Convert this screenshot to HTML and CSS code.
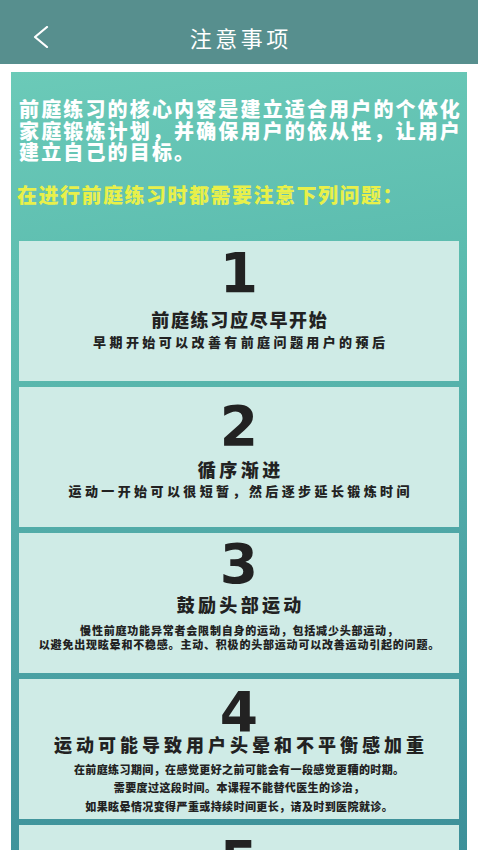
FILE: index.html
```html
<!DOCTYPE html>
<html lang="zh-CN">
<head>
<meta charset="utf-8">
<title>注意事项</title>
<link rel="stylesheet" href="styles.css">
</head>
<body>
<header class="topbar">
  <div class="back">
    <svg width="16" height="22" viewBox="0 0 16 22"><polyline points="14,1 2,11 14,21" fill="none" stroke="#ffffff" stroke-width="2.2" stroke-linecap="round" stroke-linejoin="round"/></svg>
  </div>
  <h1 class="title">注意事项</h1>
  <div class="spacer"></div>
</header>
<main class="page">
  <section class="panel">
    <p class="intro">前庭练习的核心内容是建立适合用户的个体化<br>家庭锻炼计划，并确保用户的依从性，让用户<br>建立自己的目标。</p>
    <p class="notice">在进行前庭练习时都需要注意下列问题：</p>
    <div class="cards">
      <div class="card card-1">
        <div class="num">1</div>
        <div class="card-title t1">前庭练习应尽早开始</div>
        <div class="card-sub">早期开始可以改善有前庭问题用户的预后</div>
      </div>
      <div class="card card-2">
        <div class="num">2</div>
        <div class="card-title t2">循序渐进</div>
        <div class="card-sub">运动一开始可以很短暂，然后逐步延长锻炼时间</div>
      </div>
      <div class="card card-3">
        <div class="num">3</div>
        <div class="card-title t3">鼓励头部运动</div>
        <div class="card-small">慢性前庭功能异常者会限制自身的运动，包括减少头部运动，</div>
        <div class="card-small">以避免出现眩晕和不稳感。主动、积极的头部运动可以改善运动引起的问题。</div>
      </div>
      <div class="card card-4">
        <div class="num">4</div>
        <div class="card-title t4">运动可能导致用户头晕和不平衡感加重</div>
        <div class="card-small loose">在前庭练习期间，在感觉更好之前可能会有一段感觉更糟的时期。</div>
        <div class="card-small loose">需要度过这段时间。本课程不能替代医生的诊治，</div>
        <div class="card-small loose">如果眩晕情况变得严重或持续时间更长，请及时到医院就诊。</div>
      </div>
      <div class="card card-5">
        <div class="num">5</div>
      </div>
    </div>
  </section>
</main>
</body>
</html>
```

FILE: styles.css
```css
* { box-sizing: border-box; }
html, body { margin: 0; padding: 0; }
body {
  background: #ffffff;
  font-family: "Noto Sans CJK SC", "Noto Sans", sans-serif;
  width: 478px;
}
.topbar {
  height: 64px;
  background: #578f8e;
  display: grid;
  grid-template-columns: 1fr auto 1fr;
  align-items: center;
  padding-top: 9px;
}
.back {
  padding-left: 33px;
  display: flex;
  align-items: center;
}
.back svg { display: block; }
.title {
  margin: 0;
  font-size: 22px;
  font-weight: 400;
  letter-spacing: 3.5px;
  text-indent: 3.5px;
  color: #ffffff;
  line-height: 30px;
}
.page {
  padding: 8px 11px 0 11px;
}
.panel {
  background: linear-gradient(172deg, #6bcab8 0%, #5cbcaf 25%, #4ea6a6 55%, #3f939b 80%, #3a8a95 100%);
  padding: 26px 0 20px 0;
}
.intro {
  margin: 0;
  padding-left: 8px;
  color: #ffffff;
  font-size: 20px;
  font-weight: 900;
  letter-spacing: 2.15px;
  line-height: 21.5px;
  white-space: nowrap;
}
.notice {
  margin: 21px 0 0 0;
  padding-left: 6px;
  color: #e8f04a;
  font-size: 20px;
  font-weight: 900;
  letter-spacing: 1.5px;
  line-height: 22px;
}
.cards {
  margin: 35px 8px 0 8px;
  display: flex;
  flex-direction: column;
  gap: 6px;
}
.card {
  height: 140px;
  background: #cfebe6;
  display: flex;
  flex-direction: column;
  align-items: center;
  color: #222222;
  text-align: center;
}
.num {
  font-family: "DejaVu Sans", "Lato", sans-serif;
  font-weight: 700;
  font-size: 55px;
  line-height: 56px;
  height: 56px;
  padding-top: 2px;
}
.card-title {
  font-size: 18px;
  font-weight: 900;
  line-height: 24px;
  white-space: nowrap;
}
.t1 { letter-spacing: 1.7px; text-indent: 1.7px; }
.t2 { letter-spacing: 3.5px; text-indent: 3.5px; }
.t3 { letter-spacing: 3.3px; text-indent: 3.3px; }
.t4 { letter-spacing: 4px; text-indent: 4px; }
.card-sub {
  font-size: 13px;
  font-weight: 900;
  line-height: 20px;
  letter-spacing: 3.4px;
  text-indent: 3.4px;
  white-space: nowrap;
}
.card-small {
  font-size: 11px;
  font-weight: 900;
  line-height: 14px;
  letter-spacing: 0.8px;
  text-indent: 0.8px;
  white-space: nowrap;
}
.card-small.loose {
  line-height: 18.5px;
  letter-spacing: 0.4px;
  text-indent: 0.4px;
}
.card-1 { padding-top: 2px; }
.card-1 .card-title { margin-top: 8px; }
.card-1 .card-sub { margin-top: 1px; }
.card-2 { padding-top: 9px; }
.card-2 .card-title { margin-top: 5px; }
.card-3 { padding-top: 1px; }
.card-3 .card-title { margin-top: 2px; }
.card-3 .card-title + .card-small { margin-top: 7px; }
.card-4 { padding-top: 3px; }
.card-4 .card-title { margin-top: -6px; }
.card-4 .card-title + .card-small { margin-top: 4px; }
.card-5 { padding-top: 6px; }
```
